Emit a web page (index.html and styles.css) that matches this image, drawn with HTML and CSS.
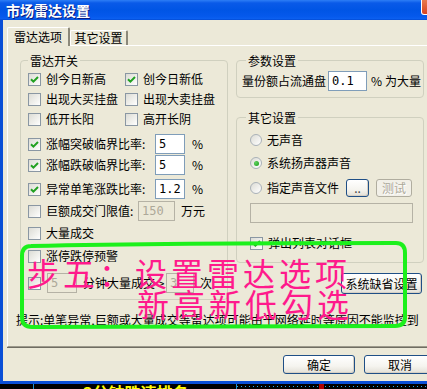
FILE: index.html
```html
<!DOCTYPE html>
<html lang="zh-CN">
<head>
<meta charset="utf-8">
<title>市场雷达设置</title>
<link rel="stylesheet" href="styles.css">
</head>
<body>
<div class="desk">
  <div class="window">
    <div class="titlebar">
      <span class="title">市场雷达设置</span>
      <span class="close"><svg width="21" height="15" viewBox="0 0 21 15"><path d="M6 3l9 9M15 3l-9 9" stroke="#fff" stroke-width="2"/></svg></span>
    </div>
    <div class="client">
      <div class="tabs">
        <div class="tab active">雷达选项</div>
        <div class="tab">其它设置</div>
      </div>
      <div class="panel">
        <div class="cols">
          <div class="group left">
            <div class="legend">雷达开关</div>
            <div class="row two r1">
              <label class="item"><span class="cb on"><svg viewBox="0 0 11 11"><path d="M2 5.2l2.4 2.4L9 3"/></svg></span>创今日新高</label>
              <label class="item"><span class="cb on"><svg viewBox="0 0 11 11"><path d="M2 5.2l2.4 2.4L9 3"/></svg></span>创今日新低</label>
            </div>
            <div class="row two">
              <label class="item"><span class="cb"></span>出现大买挂盘</label>
              <label class="item"><span class="cb"></span>出现大卖挂盘</label>
            </div>
            <div class="row two">
              <label class="item"><span class="cb"></span>低开长阳</label>
              <label class="item"><span class="cb"></span>高开长阴</label>
            </div>
            <div class="row r4">
              <span class="cb on"><svg viewBox="0 0 11 11"><path d="M2 5.2l2.4 2.4L9 3"/></svg></span>
              <span class="lbl w109">涨幅突破临界比率:</span>
              <span class="edit w30">5</span>
              <span class="unit">%</span>
            </div>
            <div class="row r5">
              <span class="cb on"><svg viewBox="0 0 11 11"><path d="M2 5.2l2.4 2.4L9 3"/></svg></span>
              <span class="lbl w109">涨幅跌破临界比率:</span>
              <span class="edit w30">5</span>
              <span class="unit">%</span>
            </div>
            <div class="row r6">
              <span class="cb on"><svg viewBox="0 0 11 11"><path d="M2 5.2l2.4 2.4L9 3"/></svg></span>
              <span class="lbl w109">异常单笔涨跌比率:</span>
              <span class="edit w30">1.2</span>
              <span class="unit">%</span>
            </div>
            <div class="row r7">
              <span class="cb"></span>
              <span class="lbl w92">巨额成交门限值:</span>
              <span class="edit w37 off">150</span>
              <span class="unit u6">万元</span>
            </div>
            <div class="row r8">
              <span class="cb"></span>
              <span class="lbl">大量成交</span>
            </div>
            <div class="row r9">
              <span class="cb"></span>
              <span class="lbl">涨停跌停预警</span>
            </div>
            <div class="row r10">
              <span class="cb"></span>
              <span class="edit w30 off first">5</span>
              <span class="lbl w83 ml6">分钟大量成交 &gt;</span>
              <span class="edit w28 off">3</span>
              <span class="unit u6">次</span>
            </div>
          </div>
          <div class="rightcol">
            <div class="group params">
              <div class="legend">参数设置</div>
              <div class="row prow">
                <span class="lbl">量份额占流通盘</span>
                <span class="edit w39 ml2">0.1</span>
                <span class="unit u4">%</span>
                <span class="unit u3">为大量</span>
              </div>
            </div>
            <div class="group other">
              <div class="legend">其它设置</div>
              <div class="row o1"><span class="rb"></span><span class="lbl">无声音</span></div>
              <div class="row o2"><span class="rb on"></span><span class="lbl">系统扬声器声音</span></div>
              <div class="row o3">
                <span class="rb"></span><span class="lbl">指定声音文件</span>
                <span class="btn small dots">..</span>
                <span class="btn small test disabled">测试</span>
              </div>
              <div class="row o4"><span class="edit wide off"></span></div>
              <div class="row o5">
                <span class="cb on"><svg viewBox="0 0 11 11"><path d="M2 5.2l2.4 2.4L9 3"/></svg></span>
                <span class="lbl">弹出列表对话框</span>
              </div>
            </div>
            <div class="defrow"><span class="btn def">系统缺省设置</span></div>
          </div>
        </div>
        <div class="hint">提示:单笔异常,巨额或大量成交等雷达项可能由于网络延时等原因不能监控到</div>
      </div>
      <div class="buttons">
        <span class="btn main">确定</span>
        <span class="btn main">取消</span>
      </div>
    </div>
  </div>
  <div class="strip">
    <span class="vline"></span>
    <span class="ytext">3分钟跌速排名</span>
    <span class="vline2"></span>
    <span class="dots-line"><span class="redmark"></span></span>
  </div>

  <svg class="annot" width="427" height="389" viewBox="0 0 427 389">
    <path d="M31 246 C 120 244, 300 243, 396 243 Q 405 243 405 253 L 405 317 Q 405 326 395 326 L 32 327 Q 22 327 22 317 L 22 256 Q 22 246 31 246 Z" fill="none" stroke="#1cf01c" stroke-width="4" stroke-linejoin="round"/>
  </svg>
  <div class="note n1">步五：设置雷达选项</div>
  <div class="note n2">新高新低勾选</div>
</div>
</body>
</html>
```
FILE: styles.css
```css
* { box-sizing: border-box; margin: 0; padding: 0; }
html, body { width: 427px; height: 389px; overflow: hidden; background: #000; }
body { font: 12px/14px "Noto Sans CJK SC", "Noto Sans", sans-serif; color: #000; }

.desk { position: relative; width: 427px; height: 389px; overflow: hidden; }

.window {
  width: 445px; height: 384px;
  background: #0a4fd6;
  display: flex; flex-direction: column;
}
.titlebar {
  height: 20px; flex: none;
  display: flex; align-items: flex-start; justify-content: space-between;
  background: linear-gradient(#2d7ef6 0%, #0a5ae8 15%, #0055e5 50%, #0559ec 82%, #0b60f0 94%, #0047d0 100%);
}
.title {
  color: #fff; font-weight: bold; font-size: 14px; line-height: 20px;
  padding-left: 6px; text-shadow: 1px 1px 0 #0a1a80;
}
.close {
  width: 21px; height: 15px; margin-right: 3px;
  border: 1px solid #fff; border-top: none; border-radius: 0 0 3px 3px;
  background: linear-gradient(#e8794f, #d8431f);
  display: flex;
}
.client {
  flex: 1; margin: 0 3px 3px 3px;
  background: #ece9d8;
  display: flex; flex-direction: column;
}

/* tabs */
.tabs { margin-top: 7px; margin-left: 4px; height: 18px; display: flex; align-items: flex-end; }
.tab {
  height: 15px; width: 58px;
  border: 1px solid #fff; border-bottom: none; border-right: 2px solid #8b887a;
  border-radius: 2px 2px 0 0;
  text-align: center; line-height: 14px;
}
.tab.active {
  position: relative; z-index: 1;
  width: 63px; height: 19px; margin-bottom: -1px;
  background: #ece9d8; line-height: 18px;
}

.panel {
  height: 302px; margin-left: 4px;
  border-top: 1px solid #fff; border-left: 1px solid #fff;
  border-bottom: 1px solid #9d9a8c;
  box-shadow: 0 1px 0 #6f6d62;
  overflow: hidden;
}
.cols { display: flex; gap: 8px; margin-top: 14px; padding-left: 12px; }

.group {
  border: 1px solid #d0d0bf; border-radius: 4px;
}
.legend {
  display: block; width: max-content;
  margin-top: -7px; padding: 0 2px;
  background: #ece9d8; line-height: 14px;
}
.group.left { width: 208px; height: 240px; padding-left: 7px; }

.row { height: 20px; display: flex; align-items: center; white-space: nowrap; }
.row.two { display: grid; grid-template-columns: 97px auto; align-items: center; }
.row.r1 { margin-top: 1px; }
.row.r4 { margin-top: 5px; }
.row.r5 { margin-top: 1px; }
.row.r6 { margin-top: 4px; }
.row.r7 { margin-top: 2px; }
.row.r8 { margin-top: 2px; }
.row.r9 { margin-top: 3px; }
.row.r10 { margin-top: 7px; }

.item { display: flex; align-items: center; }

.cb {
  flex: none; width: 13px; height: 13px; margin-right: 5px;
  border: 1px solid #8a97a3;
  background: linear-gradient(135deg, #dcdcd5 0%, #f4f4f1 70%, #fff 100%);
  display: inline-flex; align-items: center; justify-content: center;
}
.cb svg { width: 11px; height: 11px; }
.cb svg path { fill: none; stroke: #21a121; stroke-width: 2; }

.rb {
  flex: none; width: 12px; height: 12px; border-radius: 50%;
  border: 1px solid #a9b1b8;
  background: linear-gradient(135deg, #dcdcd5, #fff);
  display: inline-flex; align-items: center; justify-content: center;
}
.rb.on::after {
  content: ""; width: 5px; height: 5px; border-radius: 50%;
  background: radial-gradient(circle at 35% 35%, #5fd35f, #1a9a1a);
}
.rb + .lbl { margin-left: 5px; }

.lbl { flex: none; }
.w109 { width: 109px; }
.w92 { width: 92px; }
.w83 { width: 83px; }
.ml6 { margin-left: 6px; }
.ml2 { margin-left: 2px; }

.edit {
  flex: none; height: 20px;
  border: 1px solid #7f9db9; background: #fff;
  padding-left: 3px; line-height: 18px; font-family: "DejaVu Sans Mono", monospace; font-size: 12px;
}
.edit.off { background: #ece9d8; border-color: #b5b2a5; color: #aca899; }
.edit.first { margin-left: 1px; }
.w30 { width: 30px; }
.w37 { width: 37px; }
.w28 { width: 28px; }
.w39 { width: 39px; }
.edit.wide { width: 163px; }

.unit { flex: none; margin-left: 7px; }
.unit.u6 { margin-left: 6px; }
.unit.u4 { margin-left: 4px; }
.unit.u3 { margin-left: 3px; }

.rightcol { width: 188px; display: flex; flex-direction: column; }
.group.params { height: 38px; padding-left: 5px; }
.group.params .legend { margin-left: 4px; }
.row.prow { margin-top: 3px; }

.group.other { height: 146px; margin-top: 19px; padding-left: 13px; }
.group.other .legend { margin-left: -4px; }
.row.o1 { margin-top: 5px; }
.row.o2 { margin-top: 3px; }
.row.o3 { margin-top: 5px; }
.row.o4 { margin-top: 5px; }
.row.o5 { margin-top: 10px; }

.btn {
  flex: none; display: inline-flex; align-items: center; justify-content: center;
  border: 1px solid #1f4f86; border-radius: 3px;
  background: linear-gradient(#ffffff 0%, #f5f4ef 60%, #e3e0d6 100%);
  box-shadow: inset -1px -1px 0 #d6d0c5;
  line-height: 14px;
}
.btn.small { height: 18px; }
.btn.dots { width: 23px; margin-left: 7px; color: #444; }
.btn.test { width: 36px; margin-left: 7px; }
.btn.disabled { border-color: #b0ad9f; color: #aca899; text-shadow: 1px 1px 0 #fff; box-shadow: none; background: #f2f0e8; }

.defrow { display: flex; justify-content: flex-end; margin-top: 10px; padding-right: 2px; }
.btn.def { width: 81px; height: 21px; }

.hint { margin-top: 13px; margin-left: 8px; white-space: nowrap; line-height: 14px; }

.buttons { display: flex; justify-content: flex-end; gap: 9px; margin-top: 8px; padding-right: 6px; }
.btn.main { width: 72px; height: 19px; }

/* desktop strip below the dialog */
.strip { height: 5px; display: flex; background: #000; overflow: hidden; }
.vline { width: 1px; margin-left: 33px; background: #1e8fcf; }
.ytext { margin-left: 49px; color: #ffff00; font-weight: bold; font-size: 16px; line-height: 16px; margin-top: 0; white-space: nowrap; }
.vline2 { width: 1px; margin-left: auto; background: #1e8fcf; }
.dots-line {
  width: 190px; height: 1px; margin-top: 2px;
  background: repeating-linear-gradient(90deg, #2aa7e6 0 1px, transparent 1px 4px);
  display: flex; justify-content: flex-start;
}
.redmark { width: 5px; height: 5px; margin-left: 82px; margin-top: -2px; background: #b00000; }

/* annotation overlay */
.annot { position: absolute; left: 0; top: 0; pointer-events: none; }
.note {
  position: absolute; white-space: nowrap;
  color: #ff1a8c; font-family: "Noto Sans CJK SC", sans-serif;
  font-size: 32px; line-height: 32px; letter-spacing: 4px;
}
.n1 { left: 27px; top: 256px; }
.n2 { left: 137px; top: 287px; }
```
